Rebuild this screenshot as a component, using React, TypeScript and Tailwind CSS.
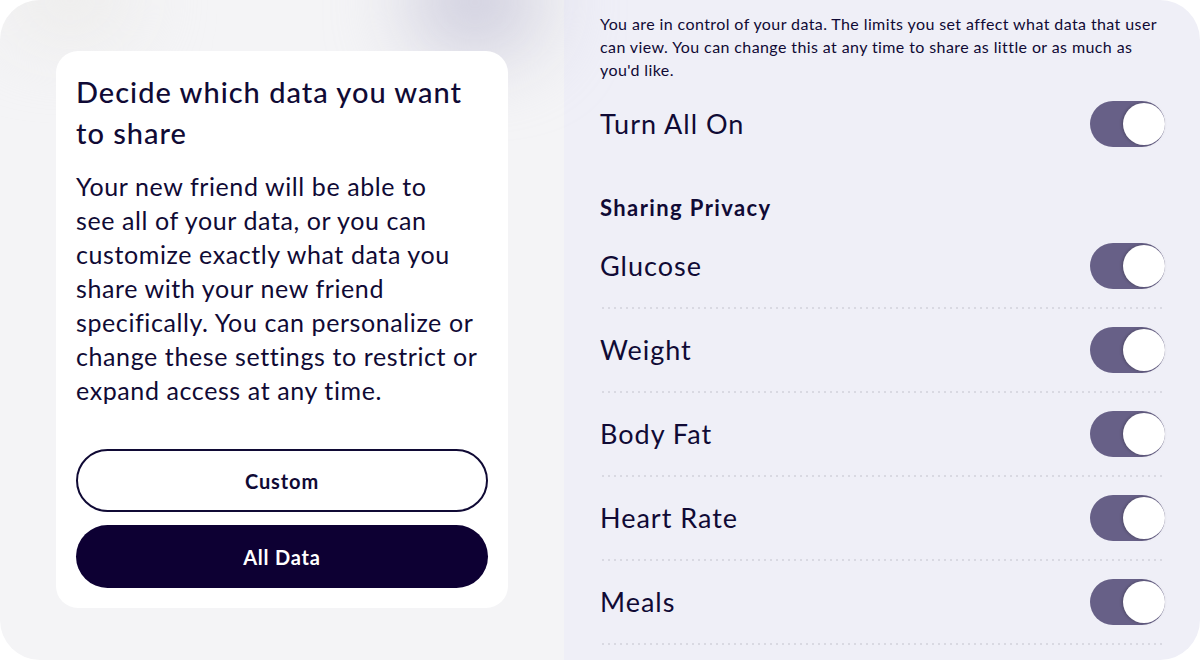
const rows = ['Glucose', 'Weight', 'Body Fat', 'Heart Rate', 'Meals'];

const intro = [
  'Your new friend will be able to',
  'see all of your data, or you can',
  'customize exactly what data you',
  'share with your new friend',
  'specifically. You can personalize or',
  'change these settings to restrict or',
  'expand access at any time.',
];

function Toggle() {
  return (
    <div className="flex h-[46px] w-[75px] items-center justify-end rounded-full bg-[#676087]">
      <div className="h-[42px] w-[42px] rounded-full bg-white shadow-[-1px_0_3px_rgba(0,0,0,0.25)]" />
    </div>
  );
}

function Divider() {
  return <div className="h-[2px] w-full bg-[radial-gradient(circle,#d9d9e2_1px,transparent_1.2px)] bg-[length:6px_2px]" />;
}

export default function App() {
  return (
    <div className="h-[660px] w-[1200px] bg-white font-['Lato',sans-serif] text-[#100a35]">
      <div className="flex h-full overflow-hidden rounded-[40px]">
        <div className="relative w-[564px] bg-[#f4f4f6] pl-[56px] pt-[51px]">
          <div className="pointer-events-none absolute -top-[45px] left-[410px] h-[95px] w-[130px] rounded-full bg-[#c9c8da] blur-2xl" />
          <div className="pointer-events-none absolute -top-[30px] left-[10px] h-[60px] w-[120px] rounded-full bg-[#eae9e6] blur-2xl" />
          <div className="relative flex h-[557px] w-[452px] flex-col rounded-[22px] bg-white px-5 pt-[20px]">
            <h1 className="text-[29px] font-medium leading-[41px] tracking-[1px]">Decide which data you want to share</h1>
            <p className="mt-[16px] whitespace-nowrap text-[25px] leading-[34px] tracking-[0.6px]">
              {intro.map((l) => (
                <span key={l} className="block">{l}</span>
              ))}
            </p>
            <div className="mt-auto mb-[20px] flex flex-col gap-[13px]">
              <button className="h-[63px] rounded-full border-2 border-[#100a35] bg-white text-[20px] font-bold tracking-[0.9px] text-[#100a35]">Custom</button>
              <button className="h-[63px] rounded-full bg-[#0d0033] text-[20px] font-bold tracking-[0.8px] text-white">All Data</button>
            </div>
          </div>
        </div>
        <div className="flex flex-1 flex-col bg-[#efeff7] pl-[36px] pr-[35px] pt-[12px]">
          <p className="text-[16px] leading-[23px] tracking-[0.4px]">
            You are in control of your data. The limits you set affect what data that user can view. You can change this at any time to share as little or as much as you'd like.
          </p>
          <div className="flex h-[86px] items-center justify-between">
            <span className="text-[27px] tracking-[1px]">Turn All On</span>
            <Toggle />
          </div>
          <div className="pt-[29px] pb-[5px] text-[22px] font-bold leading-[24px] tracking-[1.4px]">Sharing Privacy</div>
          {rows.map((r) => (
            <div key={r}>
              <div className="flex h-[82px] items-center justify-between">
                <span className="text-[27px] tracking-[1px]">{r}</span>
                <Toggle />
              </div>
              <Divider />
            </div>
          ))}
        </div>
      </div>
    </div>
  );
}
